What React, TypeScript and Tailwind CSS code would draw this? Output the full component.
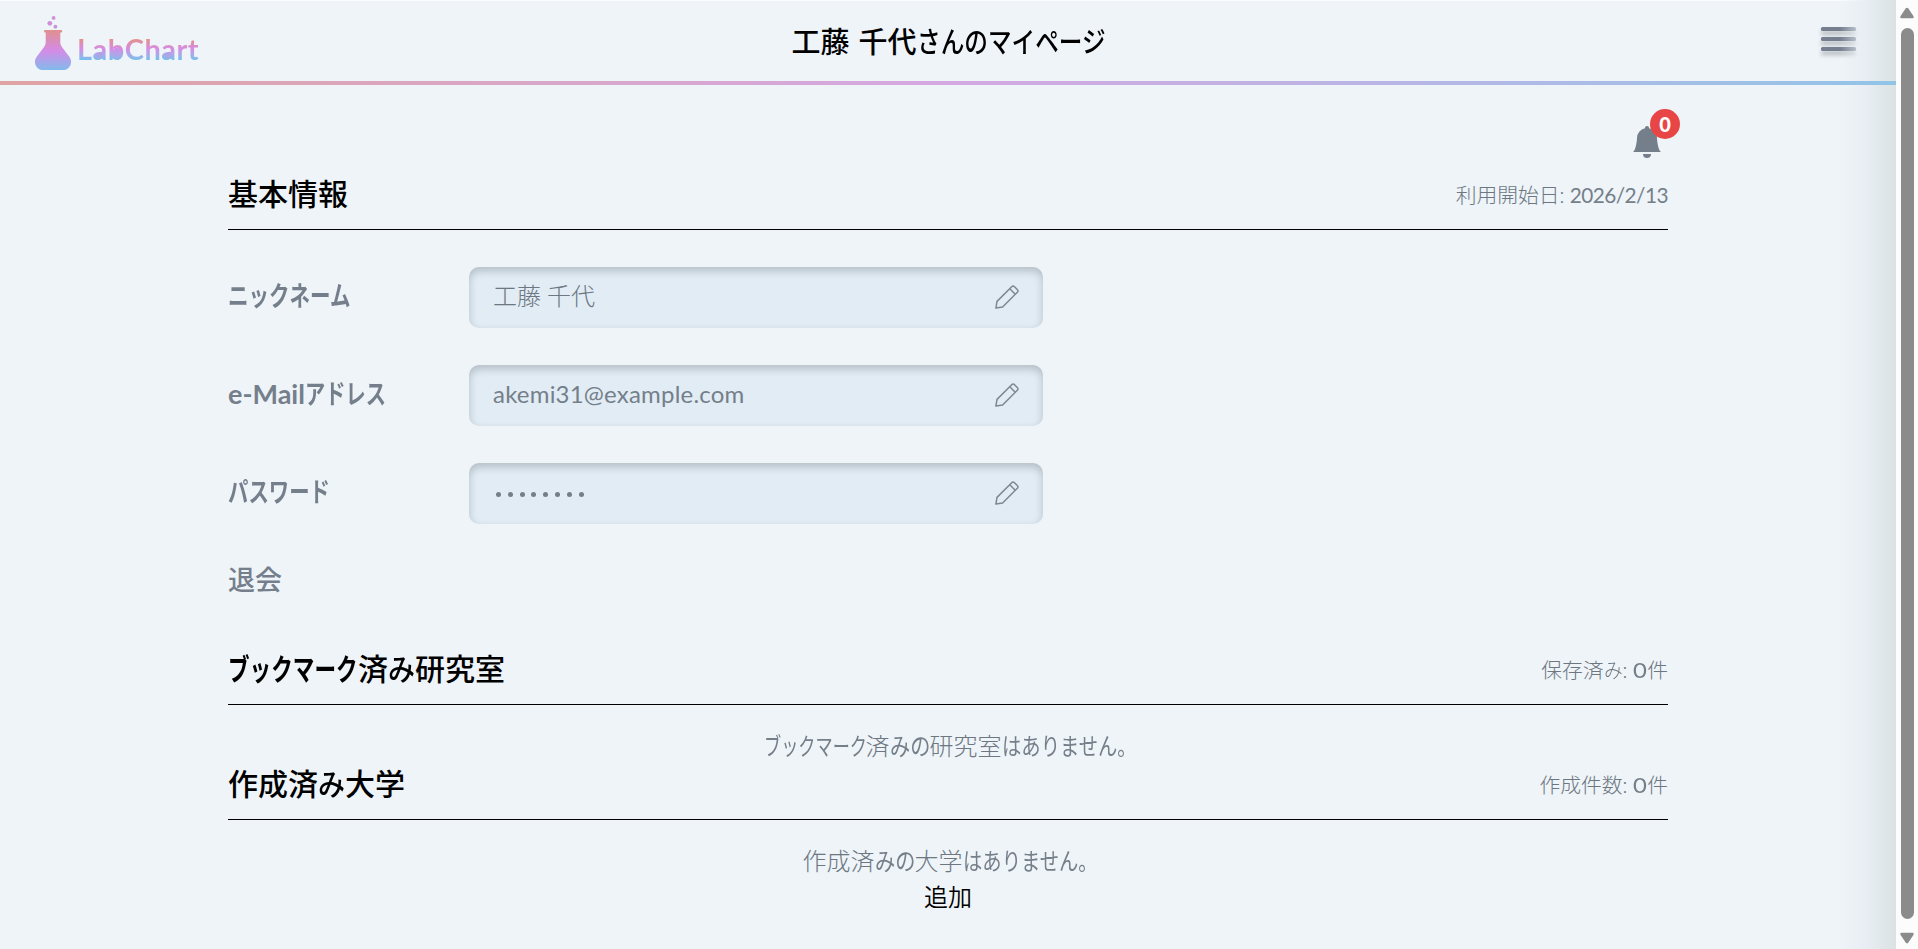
import type { ReactNode } from "react";
import { BsBellFill } from "react-icons/bs";

const kana = "inline-block origin-left whitespace-nowrap";

function Logo() {
  return (
    <a className="relative flex h-full items-start" href="#top" aria-label="LabChart">
      <svg className="mt-[15px] h-[56px] w-[36px]" viewBox="0 0 36 56">
        <defs>
          <linearGradient id="flask" x1="0" y1="14" x2="0" y2="55" gradientUnits="userSpaceOnUse">
            <stop offset="0" stopColor="#e0908e" />
            <stop offset="0.5" stopColor="#d48be6" />
            <stop offset="1" stopColor="#7dbcec" />
          </linearGradient>
        </defs>
        <circle cx="18.6" cy="1.9" r="1.9" fill="#d08fd8" />
        <circle cx="14.8" cy="7.3" r="2.4" fill="#d08fd8" />
        <circle cx="20.4" cy="10.7" r="1.9" fill="#c493dc" />
        <path
          fill="url(#flask)"
          d="M10 14h16.2q1 0 1 1.2t-1 1.2h-.9v10.2c0 2 .8 3.2 2 5l7 9.200c1.200 1.700 1.700 3.200 1.700 5.200 0 4.500-3.500 8.100-8 8.100H8c-4.500 0-8-3.600-8-8.100 0-2 .5-3.500 1.700-5.200l7-9.200c1.200-1.800 2-3 2-5V16.400H10q-1 0-1-1.200t1-1.200Z"
        />
      </svg>
      <span className="mt-[30px] ml-[6px] bg-linear-to-b from-[#e58f86] from-22% via-[#d48be6] via-50% to-[#78bdec] to-78% bg-clip-text font-['Lato'] text-[29px] leading-[36px] font-bold tracking-[0.5px] text-transparent">
        LabChart
      </span>
      <span className="absolute top-[52px] left-[60.5px] h-[5.5px] w-[7px] rounded-[2px] bg-linear-to-b from-[#b59fe8] to-[#90b2ea]" />
      <span className="absolute top-[46.5px] left-[77.5px] h-[11px] w-[7.5px] rounded-[3px] bg-linear-to-b from-[#d48be6] to-[#90b2ea]" />
      <span className="absolute top-[52px] left-[129.5px] h-[5.5px] w-[7px] rounded-[2px] bg-linear-to-b from-[#b59fe8] to-[#90b2ea]" />
    </a>
  );
}

function PencilIcon() {
  return (
    <svg width="24" height="24" viewBox="0 0 24 24" fill="none" stroke="#7f8791" strokeWidth="1.5" strokeLinejoin="round">
      <path d="M.9 23.100 2 16.400 16.700 1.700q1.400-1.400 2.800 0l2.800 2.800q1.400 1.400 0 2.800L7.600 22Z" />
      <path d="m14.800 3.800 5.400 5.400" />
    </svg>
  );
}

function MenuBar() {
  return <span className="h-1 w-full shrink-0 rounded-[1.5px] bg-[#757f8f] shadow-[0_4px_4px_rgba(0,0,0,0.25)]" />;
}

function Header() {
  return (
    <header className="border-t border-[#fafcfd]">
      <div className="grid h-20 grid-cols-[1fr_auto_1fr] pr-10 pl-[35px]">
        <Logo />
        <h1 className="pt-[20px] pl-[5px] text-[29px] leading-[44px] font-medium">
          工藤 <span className="ml-[2px]">千代</span>
          <span className={`${kana} w-[188px] scale-x-[.815]`}>さんのマイページ</span>
        </h1>
        <button className="mt-[26px] flex h-6 w-[35px] flex-col justify-between justify-self-end" aria-label="メニュー">
          <MenuBar />
          <MenuBar />
          <MenuBar />
        </button>
      </div>
      <div className="relative z-10 h-1 bg-linear-to-r from-[#dfa3a3] via-[#d4a8e2] to-[#92c4e8]" />
    </header>
  );
}

function SectionHead({ title, note }: { title: ReactNode; note: ReactNode }) {
  return (
    <div className="flex h-[69px] items-center justify-between border-b border-black">
      <h2 className="text-[30px] leading-[44px] font-medium">{title}</h2>
      <p className="pt-px text-[20.8px] font-light text-[#6d7782]">{note}</p>
    </div>
  );
}

function Zero() {
  return <span className="mr-[1px] ml-[1.5px] inline-block scale-x-115 font-['Lato'] font-normal text-[#757f8a]">0</span>;
}

function Field({ label, children }: { label: ReactNode; children: ReactNode }) {
  return (
    <div className="flex h-[61px] items-center">
      <div className="w-[241px] pb-px text-[27px] font-medium text-[#757f8c]">{label}</div>
      <div className="flex h-full w-[574px] items-center justify-between rounded-[10px] bg-[#e1ecf5] pr-6 pb-[2px] pl-6 text-[24px] font-light text-[#6d7782] shadow-[inset_0_4px_8px_rgba(0,0,0,0.2)]">
        <span>{children}</span>
        <PencilIcon />
      </div>
    </div>
  );
}

function Scrollbar() {
  return (
    <div className="flex w-[22px] flex-col items-center bg-[#fcfcfc] pt-[7px] pb-[5px]">
      <svg width="14" height="12" viewBox="0 0 14 12" fill="#8b8b8b">
        <path d="M5.600 1.500q1.400-1.700 2.800 0l5 7.500q1 2-1 2.200H1.600Q-.400 11 .6 9Z" />
      </svg>
      <div className="mt-[9px] w-[13px] flex-1 rounded-full bg-[#8b8b8b]" />
      <svg className="mt-[13px]" width="14" height="12" viewBox="0 0 14 12" fill="#8b8b8b">
        <path d="M5.600 10.500q1.400 1.700 2.800 0l5-7.500q1-2-1-2.200H1.600Q-.400 1 .6 3Z" />
      </svg>
    </div>
  );
}

export default function App() {
  return (
    <div className="flex h-[949px] overflow-hidden bg-[#eef4f8] font-['Figtree','Noto_Sans_CJK_JP',sans-serif] text-black">
      <div className="relative flex-1">
        <Header />
        <main className="mx-auto w-[1440px]">
          <div className="flex h-[76px] justify-end pt-[41px] pr-[5px]">
            <div className="relative h-8 w-8 text-[#757f8c]">
              <BsBellFill size={32} />
              <span className="absolute -top-[17px] left-[19px] flex h-[30px] w-[30px] items-center justify-center rounded-full bg-[#e84646] font-['Lato'] text-[20px] font-black text-white">
                0
              </span>
            </div>
          </div>
          <SectionHead
            title="基本情報"
            note={<>利用開始日: <span className="font-['Lato'] font-normal tracking-[-0.55px] text-[#757f8a]">2026/2/13</span></>}
          />
          <div className="mt-[37px] flex flex-col gap-[37px]">
            <Field label={<span className={`${kana} w-[122px] scale-x-[.76] font-bold`}>ニックネーム</span>}>工藤 千代</Field>
            <Field
              label={<><span className="font-['Lato'] font-bold">e-Mail</span><span className={`${kana} w-[80px] scale-x-[.75] font-bold`}>アドレス</span></>}
            >
              <span className="font-['Lato'] font-normal tracking-[0.2px] text-[#757f8a]">akemi31@example.com</span>
            </Field>
            <Field label={<span className={`${kana} w-[101px] scale-x-[.755] font-bold`}>パスワード</span>}>
              <span className="flex gap-[6.800px] pt-[3px] pl-[3px]">
                {Array.from({ length: 8 }, (_, i) => (
                  <span key={i} className="h-[5px] w-[5px] rounded-full bg-[#757f8a]" />
                ))}
              </span>
            </Field>
          </div>
          <p className="mt-[37px] h-10 text-[27px] leading-10 font-medium text-[#757f8c]">退会</p>
          <div className="h-[35px]" />
          <SectionHead
            title={<><span className={`${kana} w-[130px] scale-x-[.72] font-bold`}>ブックマーク</span>済<span className={`${kana} w-[27px] scale-x-[.9]`}>み</span>研究室</>}
            note={<>保存済<span className={`${kana} w-[19px] scale-x-[.9]`}>み</span>: <Zero />件</>}
          />
          <p className="mt-[22px] h-[24px] text-center text-[24px] leading-[40px] font-light text-[#6d7782]">
            <span className={`${kana} w-[102px] scale-x-[.715] font-normal text-[#757f8a]`}>ブックマーク</span>済
            <span className={`${kana} w-[40px] scale-x-[.84] font-normal text-[#757f8a]`}>みの</span>研究室
            <span className={`${kana} w-[131px] scale-x-[.805] font-normal text-[#757f8a]`}>はありません。</span>
          </p>
          <SectionHead
            title={<>作成済<span className={`${kana} w-[27px] scale-x-[.9]`}>み</span>大学</>}
            note={<>作成件数: <Zero />件</>}
          />
          <div className="mt-[24px] text-center text-[24px] leading-[36px] font-light">
            <p className="text-[#6d7782]">
              作成済<span className={`${kana} w-[40px] scale-x-[.84] font-normal text-[#757f8a]`}>みの</span>大学
              <span className={`${kana} w-[131px] scale-x-[.805] font-normal text-[#757f8a]`}>はありません。</span>
            </p>
            <button className="font-[350]">追加</button>
          </div>
        </main>
        <div className="pointer-events-none absolute inset-y-0 right-0 w-[56px] bg-linear-to-r from-[#ebf1f7]/0 via-[#e7edf2] via-50% to-[#dae2e3]" />
      </div>
      <Scrollbar />
    </div>
  );
}
